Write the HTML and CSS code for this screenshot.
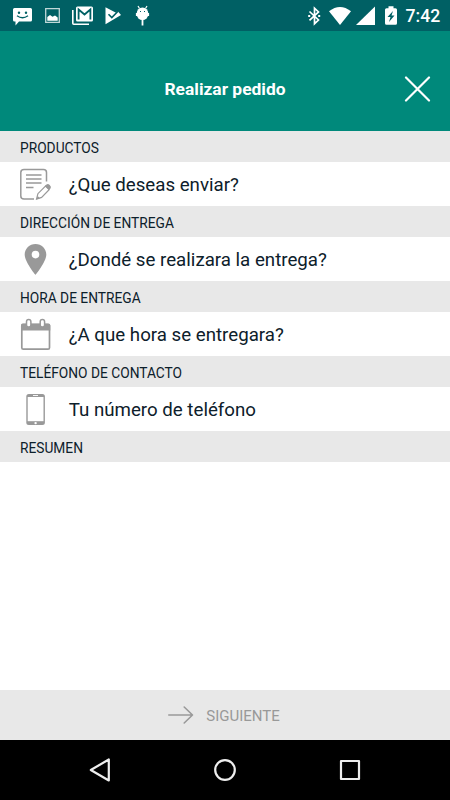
FILE: index.html
```html
<!DOCTYPE html>
<html lang="es">
<head>
<meta charset="utf-8">
<title>Realizar pedido</title>
<link rel="stylesheet" href="styles.css">
</head>
<body>
<div class="status">
  <div class="group">
    <svg width="30" height="31" viewBox="8 0 30 31"><path fill="#fff" d="M14.500 8h16q1.500 0 1.500 1.500V20q0 1.500-1.500 1.500H19L15.500 25.500V21.500h-1q-1.500 0-1.500-1.500V9.500Q13 8 14.500 8z"/><circle cx="19" cy="12.800" r="1.200" fill="#006064"/><circle cx="26" cy="12.800" r="1.200" fill="#006064"/><path d="M17 15.800q5.500 4 11 0" fill="none" stroke="#006064" stroke-width="1.400"/></svg>
    <svg width="30" height="31" viewBox="38 0 30 31"><path fill="none" stroke="#bfd7d8" stroke-width="1.300" d="M45.700 8.700h13.600v13.600H45.700z"/><path fill="#fff" d="M47.300 20.700V17l2.700-2 2.500 1.700 2.500-1.200 2.700 2v3.200z"/></svg>
    <svg width="30" height="31" viewBox="68 0 30 31"><path fill="none" stroke="#fff" stroke-width="1.600" d="M72.800 10v13.200q0 1 1 1H89"/><rect x="76" y="6.500" width="17" height="15" rx="1.500" fill="#fff"/><path d="M78.600 19.500V9.500l5.900 5 5.900-5v10" fill="none" stroke="#006064" stroke-width="1.800"/></svg>
    <svg width="30" height="31" viewBox="98 0 30 31"><path fill="#fff" d="M105.500 7.200 116 12.800l1.500-1.800 3.500 4-15.500 9.200z"/><path fill="none" stroke="#006064" stroke-width="1.600" d="m108.500 14.300 3.300 3.300 6.200-6.400"/></svg>
    <svg width="30" height="31" viewBox="128 0 30 31"><path fill="none" stroke="#fff" stroke-width="1.200" d="m138 6 1.500 2.500m7.500-2.500-1.500 2.500"/><ellipse cx="142.500" cy="13.700" rx="5.900" ry="6.300" fill="#fff"/><path stroke="#fff" stroke-width="1.800" d="M142.500 19v6.500M136.800 13v3m11.400-3v3"/><path stroke="#006064" d="M140 11.500h1m3 0h1"/></svg>
  </div>
  <div class="group">
    <svg width="27" height="31" viewBox="300 0 27 31"><path fill="none" stroke="#fff" stroke-width="1.700" d="m309.500 11.500 9 8.500-4 3.700V8.200l4 3.700-9 8.500"/><path stroke="#fff" stroke-width="2" d="M308.200 16h2m8 0h2"/></svg>
    <svg width="27" height="31" viewBox="327 0 27 31"><path fill="#fff" d="M329 11.300q11-8.600 22 0L340 25z"/></svg>
    <svg width="26" height="31" viewBox="354 0 26 31"><path fill="#fff" d="M375 6.500V25h-19z"/></svg>
    <svg width="21" height="31" viewBox="380 0 21 31"><path fill="#fff" d="M388.500 6.300h5v2h2q1.500 0 1.500 1.500v13.400q0 1.500-1.500 1.500h-9q-1.500 0-1.500-1.500V9.800q0-1.500 1.500-1.500h2z"/><path fill="#006064" d="m393 11-5.500 6h3l-1.500 5 5.500-6.500h-3z"/></svg>
    <span class="time">7:42</span>
  </div>
</div>
<header class="header">
  <h1>Realizar pedido</h1>
  <svg width="27" height="26" viewBox="0 0 27 26"><path stroke="#fff" stroke-width="2.200" stroke-linecap="round" d="m2 1.500 23 23m0-23-23 23"/></svg>
</header>
<main>
  <h2>PRODUCTOS</h2>
  <div class="row"><svg width="32" height="44" viewBox="20 162 32 44" fill="none" stroke="#999"><path stroke-width="1.500" d="M46.500 181.500V172.500q0-3-3-3H24q-3.200 0-3.200 3V196q0 3 3.200 3H34"/><path stroke-width="1.700" d="M26 175h15.500M26 179h15.500M26 183h15.500M26 187.500h7.500"/><path stroke-width="1.200" d="m36.600 199 1.300-5.300 7.600-7.600 3.600 3.600-7.500 7.700z"/><path fill="#999" stroke="none" d="m45 185.800 1.500-1.300q1.500-1 3.200.5 1.900 1.800 1 3.300l-1.700 1.700zM36.200 199.500l1.500-3.500 2.200 2.300z"/></svg><span>¿Que deseas enviar?</span></div>
  <h2>DIRECCIÓN DE ENTREGA</h2>
  <div class="row"><svg width="32" height="44" viewBox="20 237 32 44"><path fill="#999" fill-rule="evenodd" d="M35.500 244c-6 0-10.800 4.700-10.800 10.600 0 7.400 10.800 20.400 10.800 20.400s10.800-13 10.800-20.400c0-5.900-4.800-10.600-10.800-10.600zm0 6.800a3.800 3.800 0 1 1 0 7.600 3.800 3.800 0 0 1 0-7.600z"/></svg><span>¿Dondé se realizara la entrega?</span></div>
  <h2>HORA DE ENTREGA</h2>
  <div class="row"><svg width="32" height="44" viewBox="20 312 32 44"><rect x="21.800" y="324.500" width="27.700" height="24.700" rx="1.500" fill="none" stroke="#999" stroke-width="1.700"/><path fill="#999" d="M22.500 323.500h26q1.800 0 1.800 1.800v5.200H21v-5.200q0-1.800 1.500-1.800z"/><g fill="#fff" stroke="#999" stroke-width="1.500"><rect x="26.500" y="319.500" width="4.400" height="7.600" rx="2.200"/><rect x="40.200" y="319.500" width="4.400" height="7.600" rx="2.200"/></g></svg><span>¿A que hora se entregara?</span></div>
  <h2>TELÉFONO DE CONTACTO</h2>
  <div class="row"><svg width="32" height="44" viewBox="20 387 32 44"><rect x="26.300" y="394" width="18.600" height="31" rx="2.500" fill="#999"/><path fill="#fff" d="M27.700 397h15.800v24.200H27.700z"/><path stroke="#fff" stroke-width=".9" d="M33 395.500h5"/><circle cx="35.600" cy="423.100" r="1.200" fill="#fff"/></svg><span>Tu número de teléfono</span></div>
  <h2>RESUMEN</h2>
</main>
<div class="next">
  <svg width="26" height="20" viewBox="0 0 26 20"><path fill="none" stroke="#999" stroke-width="1.600" stroke-linecap="round" stroke-linejoin="round" d="M.8 10h23.700m-8.300-8 8.300 8-8.300 8"/></svg>
  <span>SIGUIENTE</span>
</div>
<nav class="nav">
  <svg width="125" height="60" viewBox="37 740 125 60"><path d="M90.800 770 108.800 759.500v21z"/></svg>
  <svg width="125" height="60" viewBox="162 740 125 60"><circle cx="225" cy="770" r="9.800"/></svg>
  <svg width="125" height="60" viewBox="287 740 125 60"><rect x="341" y="761" width="18" height="18"/></svg>
</nav>
</body>
</html>
```
FILE: styles.css
```css
* { box-sizing: border-box; }
body {
  margin: 0;
  width: 450px;
  height: 800px;
  display: flex;
  flex-direction: column;
  overflow: hidden;
  background: #fff;
  color: #0d202b;
  font-family: Roboto, "Liberation Sans", sans-serif;
}
svg { display: block; flex: none; }
.status {
  height: 31px;
  display: flex;
  justify-content: space-between;
  padding-left: 8px;
  background: #006064;
}
.group { display: flex; }
.time {
  width: 49px;
  padding-left: 4.500px;
  color: #fff;
  font-size: 17.600px;
  font-weight: 500;
  line-height: 33px;
}
.header {
  height: 100px;
  display: grid;
  grid-template-columns: 46px 1fr 46px;
  align-items: center;
  padding-top: 16px;
  background: #00897b;
  color: #fff;
}
h1 {
  grid-column: 2;
  margin: 0;
  text-align: center;
  font-size: 17.400px;
  font-weight: 700;
  line-height: 20px;
}
main { flex: 1; }
h2 {
  height: 31px;
  margin: 0;
  padding-left: 20px;
  background: #e8e8e8;
  font-size: 13.750px;
  font-weight: 400;
  line-height: 34px;
}
.row {
  height: 44px;
  display: flex;
  gap: 16.700px;
  padding-left: 20px;
  font-size: 18.700px;
  line-height: 46px;
}
.next {
  height: 50px;
  display: flex;
  align-items: center;
  justify-content: center;
  gap: 12px;
  padding-right: 2px;
  background: #e8e8e8;
  color: #999;
  font-size: 15px;
  line-height: 20px;
}
.next span { padding-top: 2px; }
.nav {
  height: 60px;
  display: flex;
  padding-left: 37px;
  background: #000;
}
.nav svg {
  fill: none;
  stroke: #eee;
  stroke-width: 2.200;
  stroke-linejoin: round;
}
```
